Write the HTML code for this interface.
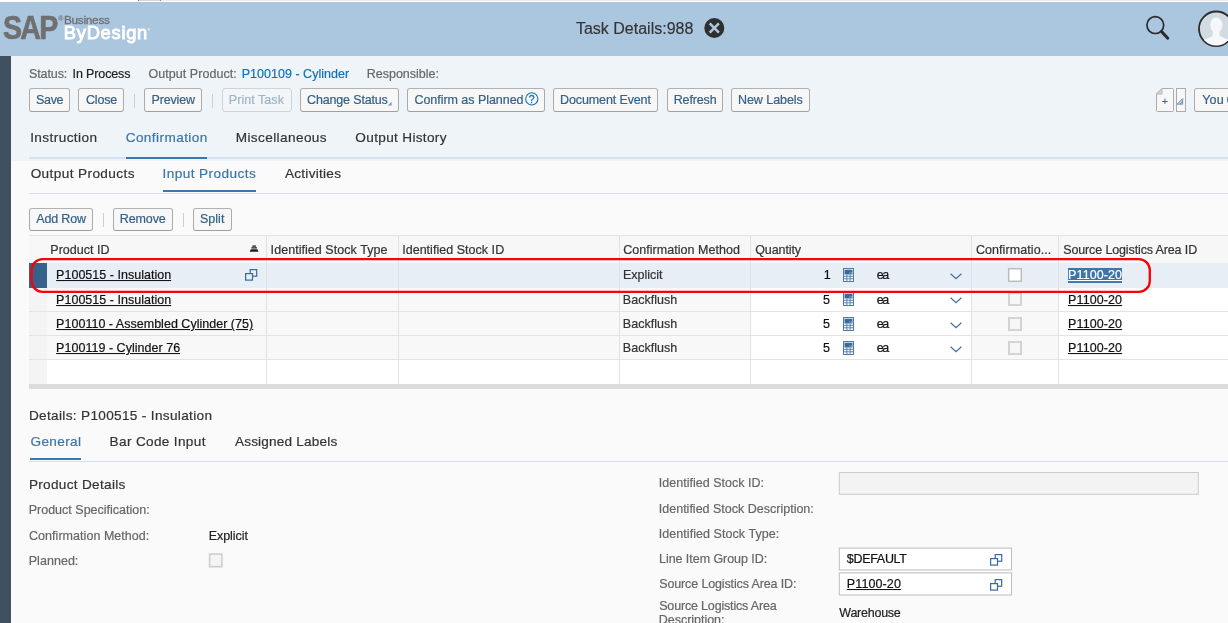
<!DOCTYPE html>
<html lang="en"><head><meta charset="utf-8"><title>Task Details:988</title>
<style>
*{box-sizing:border-box;margin:0;padding:0}
html,body{width:1228px;height:623px;overflow:hidden;background:#fafafa;font-family:"Liberation Sans",sans-serif;font-size:12px;color:#333}
.abs{position:absolute}
.btn{position:absolute;border:1px solid #ababab;border-color:#b1b1b1 #ababab #a0a0a0;border-radius:3px;background:#f7f7f7}
.sep{position:absolute;width:1px;height:14px;background:#c6d0db}
.t{position:absolute;white-space:nowrap;line-height:1;z-index:3}
#txt{position:absolute;left:0;top:0;width:1228px;height:623px;will-change:transform;z-index:3}
</style></head><body>
<div class="abs" style="left:0;top:0;width:1228px;height:2px;background:#fff"></div>
<div class="abs" style="left:161px;top:0;width:1067px;height:1px;background:#ececec"></div>
<div class="abs" style="left:138px;top:0;width:23px;height:1px;background:#d6d6d6;border-left:1px solid #888;border-right:1px solid #888"></div>
<div class="abs" style="left:0;top:2px;width:1228px;height:54px;background:#abc6df"></div>
<div class="abs" style="left:0;top:56px;width:11px;height:567px;background:#3f5161"></div>
<div class="abs" style="left:11px;top:56px;width:1217px;height:105px;background:#eff4f9"></div>
<div class="abs" style="left:29px;top:157px;width:1199px;height:2px;background:#d3e1f0"></div>
<div class="abs" style="left:126px;top:157px;width:81px;height:2px;background:#3b76ac"></div>
<div class="abs" style="left:29px;top:193px;width:1199px;height:1px;background:#d4e2f0"></div>
<div class="abs" style="left:163px;top:190px;width:93px;height:2px;background:#3b76ac"></div>
<svg class="abs" style="left:703px;top:17px" width="22" height="22" viewBox="0 0 22 22"><circle cx="11.3" cy="11" r="10" fill="#2f2f2f"/><path d="M6.700 6.400L15.900 15.600M15.900 6.400L6.700 15.600" stroke="#abc6df" stroke-width="2.6" stroke-linecap="butt"/></svg>
<svg class="abs" style="left:1144px;top:14px" width="28" height="28" viewBox="0 0 28 28"><circle cx="11.3" cy="11.1" r="8.4" fill="none" stroke="#2b2b2b" stroke-width="1.7"/><path d="M17.6 17.6L23.8 24.2" stroke="#2b2b2b" stroke-width="3" stroke-linecap="round"/></svg>
<svg class="abs" style="left:1196px;top:8px" width="32" height="42" viewBox="0 0 32 42"><defs><clipPath id="av"><circle cx="20.3" cy="20.8" r="16.6"/></clipPath></defs><circle cx="20.3" cy="20.8" r="17.3" fill="#d2dbe3" stroke="#2d2d2d" stroke-width="1.8"/><g clip-path="url(#av)" fill="#f5f7f9"><ellipse cx="20.3" cy="17" rx="6.2" ry="7.6"/><path d="M17 22h6.6v5c0 1.5 2 2.3 5 3.2c4 1.2 6 2.5 6 5v6h-29v-6c0-2.500 2-3.800 6-5c3-.9 5-1.700 5-3.200z"/></g></svg>
<div class="btn" style="left:29px;top:88px;width:41px;height:24px;"></div>
<div class="btn" style="left:78px;top:88px;width:46px;height:24px;"></div>
<div class="btn" style="left:144px;top:88px;width:58px;height:24px;"></div>
<div class="btn" style="left:300px;top:88px;width:99px;height:24px;"></div>
<div class="btn" style="left:407px;top:88px;width:138px;height:24px;"></div>
<div class="btn" style="left:553px;top:88px;width:105px;height:24px;"></div>
<div class="btn" style="left:667px;top:88px;width:56px;height:24px;"></div>
<div class="btn" style="left:731px;top:88px;width:78.5px;height:24px;"></div>
<div class="btn" style="left:222px;top:88px;width:70px;height:24px;border-color:#d0d4d8;background:#f3f6f9"></div>
<div class="sep" style="left:134px;top:94px"></div><div class="sep" style="left:212px;top:94px"></div>
<svg class="abs" style="left:387.4px;top:101px" width="5" height="5" viewBox="0 0 5 5"><path d="M4.6 0.8V4.6H0.8Z" fill="#7b9abb"/></svg>
<svg class="abs" style="left:524px;top:91px" width="16" height="16" viewBox="0 0 16 16"><circle cx="7.800" cy="7.900" r="6.100" fill="none" stroke="#1673b5" stroke-width="1.1"/></svg>
<svg class="abs" style="left:1155px;top:87px" width="34" height="26" viewBox="0 0 34 26"><path d="M7 1.500H17.500Q18.500 1.500 18.500 2.500V23.500Q18.500 24.500 17.500 24.500H2.500Q1.500 24.500 1.500 23.500V7Z" fill="#f7f7f7" stroke="#ababab" stroke-width="1"/><path d="M1.500 7L7 1.500V7Z" fill="#d9d9d9" stroke="#b5b5b5" stroke-width="1"/><rect x="21.500" y="1.500" width="9" height="23" fill="#f7f7f7" stroke="#ababab" stroke-width="1"/><path d="M27.700 11.500V17.200H22Z" fill="#c3d2e2" stroke="#6a8db2" stroke-width="0.9"/><path d="M27.700 14.300L25 17.200" fill="none" stroke="#6a8db2" stroke-width="0.9"/></svg>
<div class="btn" style="left:1194px;top:88px;width:40px;height:24px"></div>
<div class="btn" style="left:29px;top:208px;width:64px;height:23px;"></div>
<div class="btn" style="left:113px;top:208px;width:59.5px;height:23px;"></div>
<div class="btn" style="left:193px;top:208px;width:38.5px;height:23px;"></div>
<div class="sep" style="left:103px;top:213px"></div><div class="sep" style="left:182.5px;top:213px"></div>
<div class="abs" style="left:29px;top:235px;width:1199px;height:28px;background:#f7f7f7;border-top:1px solid #e3e3e3"></div>
<div class="abs" style="left:29px;top:263px;width:1199px;height:24.5px;background:#e8eef6"></div>
<div class="abs" style="left:29px;top:263px;width:18px;height:24.5px;background:#35618a"></div>
<div class="abs" style="left:29px;top:288px;width:18px;height:96px;background:#f4f4f4"></div>
<div class="abs" style="left:47px;top:288px;width:1181px;height:96px;background:#fff"></div>
<div class="abs" style="left:47px;top:288px;width:703px;height:72px;background:#f8f8f8"></div>
<div class="abs" style="left:971px;top:288px;width:87px;height:72px;background:#f8f8f8"></div>
<div class="abs" style="left:29px;top:311px;width:1199px;height:1px;background:#e4e4e4"></div>
<div class="abs" style="left:29px;top:335px;width:1199px;height:1px;background:#e4e4e4"></div>
<div class="abs" style="left:29px;top:359px;width:1199px;height:1px;background:#e4e4e4"></div>
<div class="abs" style="left:266px;top:236px;width:1px;height:148px;background:#e2e2e2"></div>
<div class="abs" style="left:398px;top:236px;width:1px;height:148px;background:#e2e2e2"></div>
<div class="abs" style="left:619px;top:236px;width:1px;height:148px;background:#e2e2e2"></div>
<div class="abs" style="left:750px;top:236px;width:1px;height:148px;background:#e2e2e2"></div>
<div class="abs" style="left:971px;top:236px;width:1px;height:148px;background:#e2e2e2"></div>
<div class="abs" style="left:1058px;top:236px;width:1px;height:148px;background:#e2e2e2"></div>
<div class="abs" style="left:29px;top:384px;width:1199px;height:5px;background:#dcdcdc"></div>
<svg class="abs" style="left:249px;top:245px" width="10" height="8" viewBox="0 0 10 8"><path d="M3.3 0.6h3.7v1.1h-3.7zM2.4 2.3h5.5v1.1h-5.5zM1.8 4.2h6.6l1.1 2.6h-8.8z" fill="#1e1e1e"/></svg>
<svg class="abs" style="left:244.6px;top:269.1px" width="13" height="12" viewBox="0 0 13 12"><rect x="5.2" y="0.6" width="6.500" height="6.600" fill="none" stroke="#3a6a99" stroke-width="1.2"/><rect x="0.6" y="4.600" width="6.900" height="6.500" fill="#e8eef6" stroke="#3a6a99" stroke-width="1.2"/></svg>
<svg class="abs" style="left:843px;top:268px" width="11" height="14" viewBox="0 0 11 14"><rect x="0.5" y="0.5" width="10" height="13" fill="#fff" stroke="#4d7aa8" stroke-width="1"/><rect x="1.500" y="1.700" width="8" height="4.800" fill="#3a6a99"/><path d="M6.300 4.600h1v1h-1zM8 4.600h1v1h-1z" fill="#a9c0d8"/><path d="M1 8.300H10M1 10.800H10M3.900 6.500V13M7.100 6.500V13" stroke="#5b84ae" stroke-width="1" fill="none"/></svg>
<svg class="abs" style="left:949.6px;top:273.4px" width="12" height="7" viewBox="0 0 12 7"><path d="M0.6 0.8L6 5.8L11.4 0.8" stroke="#3f6f9f" stroke-width="1.2" fill="none"/></svg>
<svg class="abs" style="left:1005px;top:265px" width="20" height="20" viewBox="0 0 20 20"><rect x="3.700" y="3.700" width="12.600" height="12.600" fill="#fff" stroke="#bdbdbd" stroke-width="1.5"/></svg>
<svg class="abs" style="left:843px;top:292px" width="11" height="14" viewBox="0 0 11 14"><rect x="0.5" y="0.5" width="10" height="13" fill="#fff" stroke="#4d7aa8" stroke-width="1"/><rect x="1.500" y="1.700" width="8" height="4.800" fill="#3a6a99"/><path d="M6.300 4.600h1v1h-1zM8 4.600h1v1h-1z" fill="#a9c0d8"/><path d="M1 8.300H10M1 10.800H10M3.900 6.500V13M7.100 6.500V13" stroke="#5b84ae" stroke-width="1" fill="none"/></svg>
<svg class="abs" style="left:949.6px;top:297.4px" width="12" height="7" viewBox="0 0 12 7"><path d="M0.6 0.8L6 5.8L11.4 0.8" stroke="#3f6f9f" stroke-width="1.2" fill="none"/></svg>
<div class="abs" style="left:1008px;top:292px;width:14px;height:14px;border:2px solid #d4d4d4;background:#f6f6f6"></div>
<svg class="abs" style="left:843px;top:316.5px" width="11" height="14" viewBox="0 0 11 14"><rect x="0.5" y="0.5" width="10" height="13" fill="#fff" stroke="#4d7aa8" stroke-width="1"/><rect x="1.500" y="1.700" width="8" height="4.800" fill="#3a6a99"/><path d="M6.300 4.600h1v1h-1zM8 4.600h1v1h-1z" fill="#a9c0d8"/><path d="M1 8.300H10M1 10.800H10M3.900 6.500V13M7.100 6.500V13" stroke="#5b84ae" stroke-width="1" fill="none"/></svg>
<svg class="abs" style="left:949.6px;top:321.9px" width="12" height="7" viewBox="0 0 12 7"><path d="M0.6 0.8L6 5.8L11.4 0.8" stroke="#3f6f9f" stroke-width="1.2" fill="none"/></svg>
<div class="abs" style="left:1008px;top:316.5px;width:14px;height:14px;border:2px solid #d4d4d4;background:#f6f6f6"></div>
<svg class="abs" style="left:843px;top:340.5px" width="11" height="14" viewBox="0 0 11 14"><rect x="0.5" y="0.5" width="10" height="13" fill="#fff" stroke="#4d7aa8" stroke-width="1"/><rect x="1.500" y="1.700" width="8" height="4.800" fill="#3a6a99"/><path d="M6.300 4.600h1v1h-1zM8 4.600h1v1h-1z" fill="#a9c0d8"/><path d="M1 8.300H10M1 10.800H10M3.900 6.500V13M7.100 6.500V13" stroke="#5b84ae" stroke-width="1" fill="none"/></svg>
<svg class="abs" style="left:949.6px;top:345.9px" width="12" height="7" viewBox="0 0 12 7"><path d="M0.6 0.8L6 5.8L11.4 0.8" stroke="#3f6f9f" stroke-width="1.2" fill="none"/></svg>
<div class="abs" style="left:1008px;top:340.5px;width:14px;height:14px;border:2px solid #d4d4d4;background:#f6f6f6"></div>
<div class="abs" style="left:1068px;top:268px;width:54px;height:14.5px;background:#3f74a8"></div>
<svg class="abs" style="left:0;top:250px;z-index:5" width="1228" height="50" viewBox="0 250 1228 50"><rect x="31.600" y="259.100" width="1118.200" height="32.800" rx="11" ry="11" fill="none" stroke="#fb0007" stroke-width="2.3"/></svg>
<div class="abs" style="left:29px;top:461px;width:1199px;height:1px;background:#d4e2f0"></div>
<div class="abs" style="left:30px;top:458px;width:51px;height:2px;background:#3b76ac"></div>
<svg class="abs" style="left:205px;top:550px" width="22" height="22" viewBox="205 550 22 22"><rect x="209.600" y="554.100" width="12.300" height="12.600" fill="#f4f4f4" stroke="#cecece" stroke-width="1.6"/></svg>
<svg class="abs" style="left:830px;top:465px" width="398" height="140" viewBox="830 465 398 140"><rect x="839.3" y="472.500" width="359" height="21.800" fill="#f3f3f3" stroke="#cbcbcb" stroke-width="1"/><rect x="839.3" y="548.100" width="172.200" height="21.800" fill="#fff" stroke="#bdbdbd" stroke-width="1"/><rect x="839.3" y="572.900" width="172.200" height="22.100" fill="#fff" stroke="#bdbdbd" stroke-width="1"/></svg>
<svg class="abs" style="left:989.9px;top:553.9px" width="13" height="12" viewBox="0 0 13 12"><rect x="5.2" y="0.6" width="6.500" height="6.600" fill="none" stroke="#3a6a99" stroke-width="1.2"/><rect x="0.6" y="4.600" width="6.900" height="6.500" fill="#fff" stroke="#3a6a99" stroke-width="1.2"/></svg>
<svg class="abs" style="left:989.9px;top:578.7px" width="13" height="12" viewBox="0 0 13 12"><rect x="5.2" y="0.6" width="6.500" height="6.600" fill="none" stroke="#3a6a99" stroke-width="1.2"/><rect x="0.6" y="4.600" width="6.900" height="6.500" fill="#fff" stroke="#3a6a99" stroke-width="1.2"/></svg>
<div id="txt">
<div class="t" style="left:575.88px;top:21.32px;font-size:16px;color:#333;letter-spacing:0.008px;-webkit-text-stroke:0.15px #333;transform:scaleY(.975);transform-origin:0 12.8px">Task Details:988</div>
<div class="t" style="left:2.85px;top:9.81px;font-size:34px;color:#6f6f6f;letter-spacing:-2.041px;font-weight:bold;-webkit-text-stroke:0.7px #6f6f6f;transform:scaleX(.84);transform-origin:0 0">SAP</div>
<div class="t" style="left:57.99px;top:15.31px;font-size:7.5px;color:#6f6f6f;font-weight:bold">®</div>
<div class="t" style="left:147.40px;top:29.21px;font-size:3.5px;color:#fff;font-weight:bold">®</div>
<div class="t" style="left:64.03px;top:14.82px;font-size:11.8px;color:#6f6f6f;letter-spacing:-0.285px;-webkit-text-stroke:0.3px #6f6f6f">Business</div>
<div class="t" style="left:63.86px;top:23.81px;font-size:18.3px;color:#fff;letter-spacing:0.740px;-webkit-text-stroke:0.9px #fff">ByDesign</div>
<div class="t" style="left:28.91px;top:68.32px;font-size:12.5px;color:#666;letter-spacing:-0.085px;transform:scaleY(1.04);transform-origin:0 10.38px;-webkit-text-stroke:0.2px #666">Status:</div>
<div class="t" style="left:72.61px;top:68.32px;font-size:12.5px;color:#222;letter-spacing:-0.139px;transform:scaleY(1.04);transform-origin:0 10.38px;-webkit-text-stroke:0.2px #222">In Process</div>
<div class="t" style="left:148.57px;top:68.32px;font-size:12.5px;color:#666;letter-spacing:0.039px;transform:scaleY(1.04);transform-origin:0 10.38px;-webkit-text-stroke:0.2px #666">Output Product:</div>
<div class="t" style="left:241.71px;top:68.32px;font-size:12.5px;color:#0f73b3;letter-spacing:0.022px;transform:scaleY(1.04);transform-origin:0 10.38px;-webkit-text-stroke:0.2px #0f73b3">P100109 - Cylinder</div>
<div class="t" style="left:366.81px;top:68.32px;font-size:12.5px;color:#666;letter-spacing:-0.017px;transform:scaleY(1.04);transform-origin:0 10.38px;-webkit-text-stroke:0.2px #666">Responsible:</div>
<div class="t" style="left:36.05px;top:94.03px;font-size:12.5px;color:#346187;letter-spacing:-0.337px;transform:scaleY(1.04);transform-origin:0 10.38px;-webkit-text-stroke:0.2px #346187">Save</div>
<div class="t" style="left:85.95px;top:94.03px;font-size:12.5px;color:#346187;letter-spacing:-0.180px;transform:scaleY(1.04);transform-origin:0 10.38px;-webkit-text-stroke:0.2px #346187">Close</div>
<div class="t" style="left:151.43px;top:94.03px;font-size:12.5px;color:#346187;letter-spacing:-0.134px;transform:scaleY(1.04);transform-origin:0 10.38px;-webkit-text-stroke:0.2px #346187">Preview</div>
<div class="t" style="left:228.81px;top:94.03px;font-size:12.5px;color:#9db3c9;letter-spacing:0.049px;transform:scaleY(1.04);transform-origin:0 10.38px;-webkit-text-stroke:0.2px #9db3c9">Print Task</div>
<div class="t" style="left:307.06px;top:94.03px;font-size:12.5px;color:#346187;letter-spacing:-0.157px;transform:scaleY(1.04);transform-origin:0 10.38px;-webkit-text-stroke:0.2px #346187">Change Status</div>
<div class="t" style="left:414.40px;top:94.03px;font-size:12.5px;color:#346187;letter-spacing:-0.038px;transform:scaleY(1.04);transform-origin:0 10.38px;-webkit-text-stroke:0.2px #346187">Confirm as Planned</div>
<div class="t" style="left:560.07px;top:94.03px;font-size:12.5px;color:#346187;letter-spacing:-0.119px;transform:scaleY(1.04);transform-origin:0 10.38px;-webkit-text-stroke:0.2px #346187">Document Event</div>
<div class="t" style="left:673.71px;top:94.03px;font-size:12.5px;color:#346187;letter-spacing:-0.138px;transform:scaleY(1.04);transform-origin:0 10.38px;-webkit-text-stroke:0.2px #346187">Refresh</div>
<div class="t" style="left:737.97px;top:94.03px;font-size:12.5px;color:#346187;letter-spacing:-0.049px;transform:scaleY(1.04);transform-origin:0 10.38px;-webkit-text-stroke:0.2px #346187">New Labels</div>
<div class="t" style="left:1202.30px;top:94.03px;font-size:12.5px;color:#346187;letter-spacing:0.105px;transform:scaleY(1.04);transform-origin:0 10.38px;-webkit-text-stroke:0.2px #346187">You</div>
<div class="t" style="left:1226.40px;top:94.03px;font-size:12.5px;color:#346187;transform:scaleY(1.04);transform-origin:0 10.38px;-webkit-text-stroke:0.2px #346187">C</div>
<div class="t" style="left:1161.68px;top:96.21px;font-size:11px;color:#346187">+</div>
<div class="t" style="left:528.82px;top:94.21px;font-size:10.5px;color:#1673b5;-webkit-text-stroke:0.35px #1673b5">?</div>
<div class="t" style="left:30.13px;top:131.26px;font-size:13.6px;color:#333;letter-spacing:0.418px;-webkit-text-stroke:0.2px #333">Instruction</div>
<div class="t" style="left:125.65px;top:131.26px;font-size:13.6px;color:#3d74a5;letter-spacing:0.422px;-webkit-text-stroke:0.2px #3d74a5">Confirmation</div>
<div class="t" style="left:235.68px;top:131.26px;font-size:13.6px;color:#333;letter-spacing:0.401px;-webkit-text-stroke:0.2px #333">Miscellaneous</div>
<div class="t" style="left:355.36px;top:131.26px;font-size:13.6px;color:#333;letter-spacing:0.327px;-webkit-text-stroke:0.2px #333">Output History</div>
<div class="t" style="left:30.63px;top:167.01px;font-size:13.6px;color:#333;letter-spacing:0.398px;-webkit-text-stroke:0.2px #333">Output Products</div>
<div class="t" style="left:162.42px;top:167.01px;font-size:13.6px;color:#3d74a5;letter-spacing:0.445px;-webkit-text-stroke:0.2px #3d74a5">Input Products</div>
<div class="t" style="left:284.91px;top:167.01px;font-size:13.6px;color:#333;letter-spacing:0.265px;-webkit-text-stroke:0.2px #333">Activities</div>
<div class="t" style="left:36.25px;top:213.28px;font-size:12.5px;color:#346187;letter-spacing:-0.166px;transform:scaleY(1.04);transform-origin:0 10.38px;-webkit-text-stroke:0.2px #346187">Add Row</div>
<div class="t" style="left:119.81px;top:213.28px;font-size:12.5px;color:#346187;letter-spacing:-0.118px;transform:scaleY(1.04);transform-origin:0 10.38px;-webkit-text-stroke:0.2px #346187">Remove</div>
<div class="t" style="left:199.91px;top:213.28px;font-size:12.5px;color:#346187;letter-spacing:0.032px;transform:scaleY(1.04);transform-origin:0 10.38px;-webkit-text-stroke:0.2px #346187">Split</div>
<div class="t" style="left:50.37px;top:244.03px;font-size:12.5px;color:#333;letter-spacing:0.006px;transform:scaleY(1.04);transform-origin:0 10.38px;-webkit-text-stroke:0.2px #333">Product ID</div>
<div class="t" style="left:270.61px;top:244.03px;font-size:12.5px;color:#333;letter-spacing:0.049px;transform:scaleY(1.04);transform-origin:0 10.38px;-webkit-text-stroke:0.2px #333">Identified Stock Type</div>
<div class="t" style="left:402.18px;top:244.03px;font-size:12.5px;color:#333;letter-spacing:0.030px;transform:scaleY(1.04);transform-origin:0 10.38px;-webkit-text-stroke:0.2px #333">Identified Stock ID</div>
<div class="t" style="left:623.20px;top:244.03px;font-size:12.5px;color:#333;letter-spacing:0.034px;transform:scaleY(1.04);transform-origin:0 10.38px;-webkit-text-stroke:0.2px #333">Confirmation Method</div>
<div class="t" style="left:755.20px;top:244.03px;font-size:12.5px;color:#333;letter-spacing:-0.097px;transform:scaleY(1.04);transform-origin:0 10.38px;-webkit-text-stroke:0.2px #333">Quantity</div>
<div class="t" style="left:975.88px;top:244.03px;font-size:12.5px;color:#333;letter-spacing:0.084px;transform:scaleY(1.04);transform-origin:0 10.38px;-webkit-text-stroke:0.2px #333">Confirmatio...</div>
<div class="t" style="left:1063.21px;top:244.03px;font-size:12.5px;color:#333;letter-spacing:-0.127px;transform:scaleY(1.04);transform-origin:0 10.38px;-webkit-text-stroke:0.2px #333">Source Logistics Area ID</div>
<div class="t" style="left:56.11px;top:269.03px;font-size:12.5px;color:#111;letter-spacing:0.018px;text-decoration:underline;transform:scaleY(1.04);transform-origin:0 10.38px;-webkit-text-stroke:0.2px #111">P100515 - Insulation</div>
<div class="t" style="left:623.00px;top:269.03px;font-size:12.5px;color:#333;letter-spacing:-0.035px;transform:scaleY(1.04);transform-origin:0 10.38px;-webkit-text-stroke:0.2px #333">Explicit</div>
<div class="t" style="left:823.77px;top:269.03px;font-size:12.5px;color:#111;transform:scaleY(1.04);transform-origin:0 10.38px;-webkit-text-stroke:0.2px #111">1</div>
<div class="t" style="left:876.79px;top:269.03px;font-size:12.5px;color:#111;letter-spacing:-1.362px;transform:scaleY(1.04);transform-origin:0 10.38px;-webkit-text-stroke:0.2px #111">ea</div>
<div class="t" style="left:1068.11px;top:269.03px;font-size:12.5px;color:#fff;letter-spacing:0.092px;text-decoration:underline;transform:scaleY(1.04);transform-origin:0 10.38px;-webkit-text-stroke:0.2px #fff">P1100-20</div>
<div class="t" style="left:56.11px;top:293.78px;font-size:12.5px;color:#111;letter-spacing:0.018px;text-decoration:underline;transform:scaleY(1.04);transform-origin:0 10.38px;-webkit-text-stroke:0.2px #111">P100515 - Insulation</div>
<div class="t" style="left:622.80px;top:293.78px;font-size:12.5px;color:#333;letter-spacing:0.034px;transform:scaleY(1.04);transform-origin:0 10.38px;-webkit-text-stroke:0.2px #333">Backflush</div>
<div class="t" style="left:823.06px;top:293.78px;font-size:12.5px;color:#111;transform:scaleY(1.04);transform-origin:0 10.38px;-webkit-text-stroke:0.2px #111">5</div>
<div class="t" style="left:876.79px;top:293.78px;font-size:12.5px;color:#111;letter-spacing:-1.362px;transform:scaleY(1.04);transform-origin:0 10.38px;-webkit-text-stroke:0.2px #111">ea</div>
<div class="t" style="left:1068.11px;top:293.78px;font-size:12.5px;color:#111;letter-spacing:0.092px;text-decoration:underline;transform:scaleY(1.04);transform-origin:0 10.38px;-webkit-text-stroke:0.2px #111">P1100-20</div>
<div class="t" style="left:56.11px;top:317.78px;font-size:12.5px;color:#111;letter-spacing:0.020px;text-decoration:underline;transform:scaleY(1.04);transform-origin:0 10.38px;-webkit-text-stroke:0.2px #111">P100110 - Assembled Cylinder (75)</div>
<div class="t" style="left:622.80px;top:317.78px;font-size:12.5px;color:#333;letter-spacing:0.034px;transform:scaleY(1.04);transform-origin:0 10.38px;-webkit-text-stroke:0.2px #333">Backflush</div>
<div class="t" style="left:823.06px;top:317.78px;font-size:12.5px;color:#111;transform:scaleY(1.04);transform-origin:0 10.38px;-webkit-text-stroke:0.2px #111">5</div>
<div class="t" style="left:876.79px;top:317.78px;font-size:12.5px;color:#111;letter-spacing:-1.362px;transform:scaleY(1.04);transform-origin:0 10.38px;-webkit-text-stroke:0.2px #111">ea</div>
<div class="t" style="left:1068.11px;top:317.78px;font-size:12.5px;color:#111;letter-spacing:0.092px;text-decoration:underline;transform:scaleY(1.04);transform-origin:0 10.38px;-webkit-text-stroke:0.2px #111">P1100-20</div>
<div class="t" style="left:56.11px;top:341.78px;font-size:12.5px;color:#111;letter-spacing:0.027px;text-decoration:underline;transform:scaleY(1.04);transform-origin:0 10.38px;-webkit-text-stroke:0.2px #111">P100119 - Cylinder 76</div>
<div class="t" style="left:622.80px;top:341.78px;font-size:12.5px;color:#333;letter-spacing:0.034px;transform:scaleY(1.04);transform-origin:0 10.38px;-webkit-text-stroke:0.2px #333">Backflush</div>
<div class="t" style="left:823.06px;top:341.78px;font-size:12.5px;color:#111;transform:scaleY(1.04);transform-origin:0 10.38px;-webkit-text-stroke:0.2px #111">5</div>
<div class="t" style="left:876.79px;top:341.78px;font-size:12.5px;color:#111;letter-spacing:-1.362px;transform:scaleY(1.04);transform-origin:0 10.38px;-webkit-text-stroke:0.2px #111">ea</div>
<div class="t" style="left:1068.11px;top:341.78px;font-size:12.5px;color:#111;letter-spacing:0.092px;text-decoration:underline;transform:scaleY(1.04);transform-origin:0 10.38px;-webkit-text-stroke:0.2px #111">P1100-20</div>
<div class="t" style="left:28.92px;top:409.01px;font-size:13.6px;color:#333;letter-spacing:0.330px;-webkit-text-stroke:0.2px #333">Details: P100515 - Insulation</div>
<div class="t" style="left:30.49px;top:435.26px;font-size:13.6px;color:#3d74a5;letter-spacing:0.368px;-webkit-text-stroke:0.2px #3d74a5">General</div>
<div class="t" style="left:109.62px;top:435.26px;font-size:13.6px;color:#333;letter-spacing:0.336px;-webkit-text-stroke:0.2px #333">Bar Code Input</div>
<div class="t" style="left:234.88px;top:435.26px;font-size:13.6px;color:#333;letter-spacing:0.196px;-webkit-text-stroke:0.2px #333">Assigned Labels</div>
<div class="t" style="left:28.92px;top:478.26px;font-size:13.6px;color:#333;letter-spacing:0.307px;-webkit-text-stroke:0.2px #333">Product Details</div>
<div class="t" style="left:28.71px;top:503.78px;font-size:12.5px;color:#666;letter-spacing:0.004px;transform:scaleY(1.04);transform-origin:0 10.38px;-webkit-text-stroke:0.2px #666">Product Specification:</div>
<div class="t" style="left:29.06px;top:530.28px;font-size:12.5px;color:#666;letter-spacing:0.039px;transform:scaleY(1.04);transform-origin:0 10.38px;-webkit-text-stroke:0.2px #666">Confirmation Method:</div>
<div class="t" style="left:208.67px;top:530.28px;font-size:12.5px;color:#222;letter-spacing:-0.052px;transform:scaleY(1.04);transform-origin:0 10.38px;-webkit-text-stroke:0.2px #222">Explicit</div>
<div class="t" style="left:28.71px;top:554.53px;font-size:12.5px;color:#666;letter-spacing:0.042px;transform:scaleY(1.04);transform-origin:0 10.38px;-webkit-text-stroke:0.2px #666">Planned:</div>
<div class="t" style="left:658.80px;top:477.03px;font-size:12.5px;color:#666;letter-spacing:0.020px;transform:scaleY(1.04);transform-origin:0 10.38px;-webkit-text-stroke:0.2px #666">Identified Stock ID:</div>
<div class="t" style="left:658.80px;top:503.28px;font-size:12.5px;color:#666;letter-spacing:0.002px;transform:scaleY(1.04);transform-origin:0 10.38px;-webkit-text-stroke:0.2px #666">Identified Stock Description:</div>
<div class="t" style="left:658.80px;top:527.78px;font-size:12.5px;color:#666;letter-spacing:0.054px;transform:scaleY(1.04);transform-origin:0 10.38px;-webkit-text-stroke:0.2px #666">Identified Stock Type:</div>
<div class="t" style="left:659.00px;top:553.03px;font-size:12.5px;color:#666;letter-spacing:-0.047px;transform:scaleY(1.04);transform-origin:0 10.38px;-webkit-text-stroke:0.2px #666">Line Item Group ID:</div>
<div class="t" style="left:659.21px;top:578.03px;font-size:12.5px;color:#666;letter-spacing:-0.129px;transform:scaleY(1.04);transform-origin:0 10.38px;-webkit-text-stroke:0.2px #666">Source Logistics Area ID:</div>
<div class="t" style="left:659.21px;top:599.53px;font-size:12.5px;color:#666;letter-spacing:-0.171px;transform:scaleY(1.04);transform-origin:0 10.38px;-webkit-text-stroke:0.2px #666">Source Logistics Area</div>
<div class="t" style="left:658.81px;top:613.71px;font-size:12.5px;color:#666;letter-spacing:-0.027px;transform:scaleY(1.04);transform-origin:0 10.38px;-webkit-text-stroke:0.2px #666">Description:</div>
<div class="t" style="left:846.86px;top:553.03px;font-size:12.5px;color:#111;letter-spacing:-0.316px;transform:scaleY(1.04);transform-origin:0 10.38px;-webkit-text-stroke:0.2px #111">$DEFAULT</div>
<div class="t" style="left:846.87px;top:578.03px;font-size:12.5px;color:#111;letter-spacing:0.100px;text-decoration:underline;transform:scaleY(1.04);transform-origin:0 10.38px;-webkit-text-stroke:0.2px #111">P1100-20</div>
<div class="t" style="left:839.34px;top:606.53px;font-size:12.5px;color:#222;letter-spacing:-0.246px;transform:scaleY(1.04);transform-origin:0 10.38px;-webkit-text-stroke:0.2px #222">Warehouse</div>
</div>
</body></html>
